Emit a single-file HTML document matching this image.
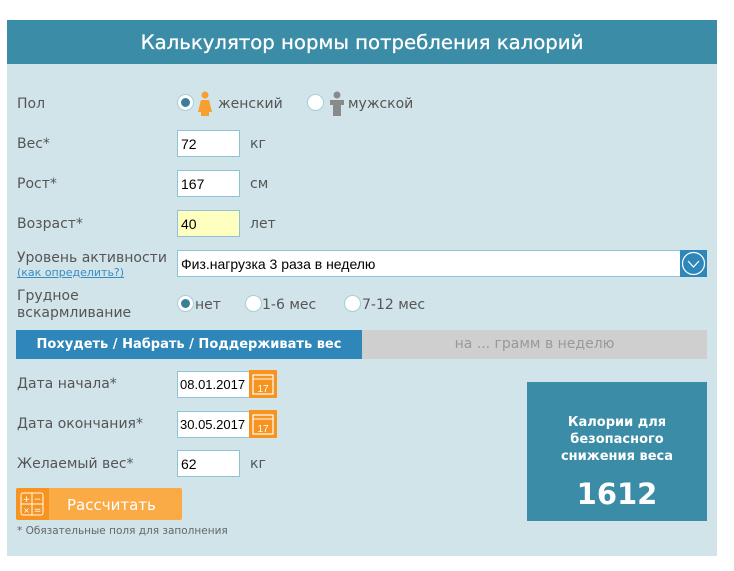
<!DOCTYPE html>
<html><head><meta charset="utf-8"><style>
*{margin:0;padding:0;box-sizing:border-box}
body{width:734px;height:571px;background:#fff;position:relative;font-family:"DejaVu Sans","Liberation Sans",sans-serif;overflow:hidden}
.a{position:absolute}
.hdr{left:7px;top:20px;width:710px;height:44px;background:#3a8ca7;color:#fff;font-size:19.7px;text-align:center;line-height:46px;-webkit-text-stroke:0.3px #fff}
.bd{left:7px;top:64px;width:710px;height:492px;background:#d1e4ea}
.lb{color:#555;font-size:14px}
.in{background:#fff;border:1px solid #8fc4d6;height:27px;font-family:"Liberation Sans",sans-serif;font-size:14px;color:#000;padding-left:3px;line-height:26px}
.rad{width:17px;height:17px;border-radius:50%;background:#fff;border:1px solid #a9cdd9}
.rad.on::after{content:"";position:absolute;left:3px;top:3px;width:9px;height:9px;border-radius:50%;background:#3a7f9a}
</style></head><body>
<div class="a hdr">Калькулятор нормы потребления калорий</div>
<div class="a bd"></div>

<div class="a lb" style="left:17px;top:96px">Пол</div>
<div class="a rad on" style="left:177px;top:94px"></div>
<svg class="a" style="left:198px;top:91px" width="14" height="25"><circle cx="7" cy="4" r="3.5" fill="#f7a030"/><path d="M3 9h8l3 12h-3v4h-8v-4h-3z" fill="#f7a030"/></svg>
<div class="a lb" style="left:218px;top:96px">женский</div>
<div class="a rad" style="left:307px;top:94px"></div>
<svg class="a" style="left:330px;top:91px" width="14" height="25"><circle cx="7" cy="4" r="3.5" fill="#8a8a8a"/><path d="M0 9h14v5h-3v11h-8v-11h-3z" fill="#8a8a8a"/></svg>
<div class="a lb" style="left:348px;top:96px">мужской</div>

<div class="a lb" style="left:17px;top:136px">Вес*</div>
<div class="a in" style="left:177px;top:130px;width:63px">72</div>
<div class="a lb" style="left:250px;top:136px">кг</div>

<div class="a lb" style="left:17px;top:176px">Рост*</div>
<div class="a in" style="left:177px;top:170px;width:63px">167</div>
<div class="a lb" style="left:250px;top:176px">см</div>

<div class="a lb" style="left:17px;top:216px">Возраст*</div>
<div class="a in" style="left:177px;top:210px;width:63px;background:#ffffc0">40</div>
<div class="a lb" style="left:250px;top:216px">лет</div>

<div class="a lb" style="left:17px;top:250px">Уровень активности</div>
<div class="a" style="left:17px;top:266px;font-size:11px;color:#3a8cc0;text-decoration:underline">(как определить?)</div>
<div class="a in" style="left:177px;top:250px;width:504px;height:27px">Физ.нагрузка 3 раза в неделю</div>
<div class="a" style="left:680px;top:250px;width:27px;height:27px;background:#2f86b9"><svg width="27" height="27"><circle cx="13.5" cy="13.5" r="11" fill="none" stroke="#fff" stroke-width="1.2"/><path d="M8 11l5.5 6 5.5-6" fill="none" stroke="#fff" stroke-width="1.2"/></svg></div>

<div class="a lb" style="left:17px;top:288px;line-height:17px">Грудное<br>вскармливание</div>
<div class="a rad on" style="left:177px;top:295px"></div>
<div class="a lb" style="left:195px;top:297px">нет</div>
<div class="a rad" style="left:245px;top:295px"></div>
<div class="a lb" style="left:262px;top:297px">1-6 мес</div>
<div class="a rad" style="left:344px;top:295px"></div>
<div class="a lb" style="left:362px;top:297px">7-12 мес</div>

<div class="a" style="left:16px;top:330px;width:346px;height:29px;background:#2f86b9;color:#fff;font-size:13px;font-weight:bold;text-align:center;line-height:29px">Похудеть / Набрать / Поддерживать вес</div>
<div class="a" style="left:362px;top:330px;width:345px;height:29px;background:#cfcfcf;color:#999;font-size:14px;text-align:center;line-height:29px">на ... грамм в неделю</div>

<div class="a lb" style="left:17px;top:376px">Дата начала*</div>
<div class="a in" style="left:177px;top:371px;width:73px;font-size:13px;padding-left:2px">08.01.2017</div>
<svg class="a" style="left:249px;top:370px" width="28" height="28"><rect width="28" height="28" fill="#f7931e"/><rect x="4" y="5" width="20" height="19" fill="none" stroke="#fff" stroke-width="1.2"/><line x1="4" y1="9" x2="24" y2="9" stroke="#fff"/><text x="14" y="22" fill="#fff" font-size="10" text-anchor="middle" font-family="Liberation Sans">17</text></svg>

<div class="a lb" style="left:17px;top:416px">Дата окончания*</div>
<div class="a in" style="left:177px;top:411px;width:73px;font-size:13px;padding-left:2px">30.05.2017</div>
<svg class="a" style="left:249px;top:410px" width="28" height="28"><rect width="28" height="28" fill="#f7931e"/><rect x="4" y="5" width="20" height="19" fill="none" stroke="#fff" stroke-width="1.2"/><line x1="4" y1="9" x2="24" y2="9" stroke="#fff"/><text x="14" y="22" fill="#fff" font-size="10" text-anchor="middle" font-family="Liberation Sans">17</text></svg>

<div class="a lb" style="left:17px;top:456px">Желаемый вес*</div>
<div class="a in" style="left:177px;top:450px;width:63px">62</div>
<div class="a lb" style="left:250px;top:456px">кг</div>

<div class="a" style="left:16px;top:488px;width:166px;height:32px;background:#fbab45;border-radius:2px"></div>
<div class="a" style="left:16px;top:488px;width:33px;height:32px;background:#f7931e;border-radius:2px 0 0 2px"><svg width="33" height="32"><rect x="5" y="5" width="22" height="22" rx="2" fill="none" stroke="#fff" stroke-width="1"/><line x1="16" y1="5" x2="16" y2="27" stroke="#fff"/><line x1="5" y1="16" x2="27" y2="16" stroke="#fff"/><text x="10.5" y="14" fill="#fff" font-size="9" text-anchor="middle">+</text><text x="21.5" y="14" fill="#fff" font-size="9" text-anchor="middle">−</text><text x="10.5" y="25" fill="#fff" font-size="8" text-anchor="middle">×</text><text x="21.5" y="25" fill="#fff" font-size="9" text-anchor="middle">=</text></svg></div>
<div class="a" style="left:67px;top:496px;color:#fff;font-size:15px">Рассчитать</div>
<div class="a" style="left:17px;top:525px;font-size:10.5px;color:#666">* Обязательные поля для заполнения</div>

<div class="a" style="left:527px;top:382px;width:180px;height:139px;background:#3a8ca7;color:#fff;text-align:center;font-weight:bold">
<div style="margin-top:32px;font-size:13px;line-height:17px">Калории для<br>безопасного<br>снижения веса</div>
<div style="font-size:29px;margin-top:12px">1612</div>
</div>
</body></html>
